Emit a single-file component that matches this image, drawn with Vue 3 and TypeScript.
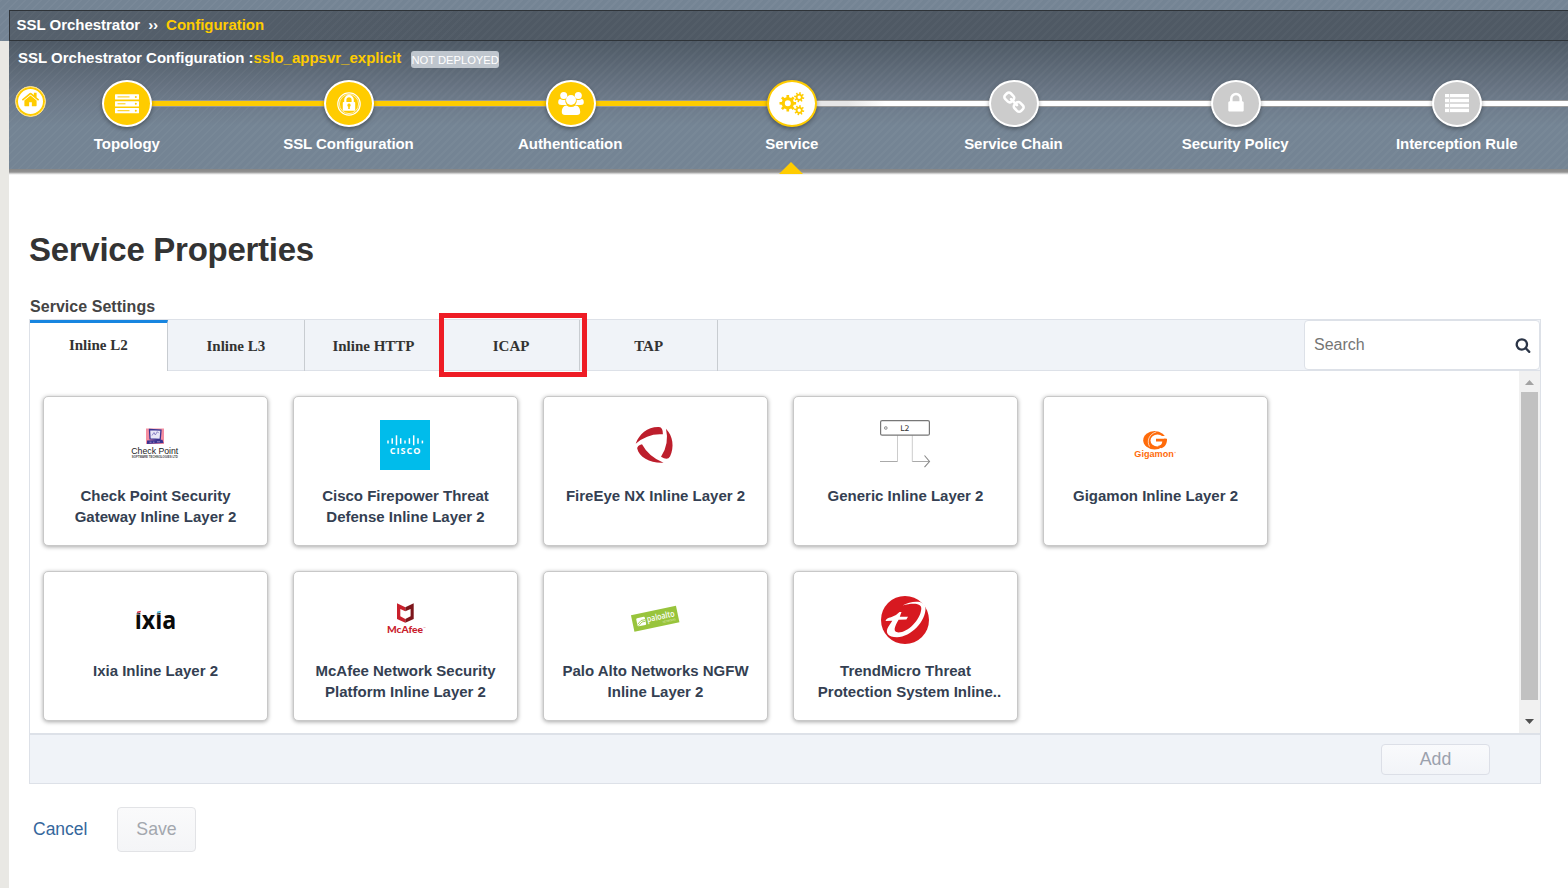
<script setup lang="ts">
interface Step {
  label: string
  icon: string
  state: 'done' | 'active' | 'todo'
}

interface ServiceCard {
  logo: string
  lines: string[]
  truncated?: boolean
}

const steps: Step[] = [
  { label: 'Topology', icon: 'server', state: 'done' },
  { label: 'SSL Configuration', icon: 'badge-lock', state: 'done' },
  { label: 'Authentication', icon: 'users', state: 'done' },
  { label: 'Service', icon: 'cogs', state: 'active' },
  { label: 'Service Chain', icon: 'chain', state: 'todo' },
  { label: 'Security Policy', icon: 'lock', state: 'todo' },
  { label: 'Interception Rule', icon: 'list', state: 'todo' },
]

const tabs: string[] = ['Inline L2', 'Inline L3', 'Inline HTTP', 'ICAP', 'TAP']

const cards: ServiceCard[] = [
  { logo: 'checkpoint', lines: ['Check Point Security', 'Gateway Inline Layer 2'] },
  { logo: 'cisco', lines: ['Cisco Firepower Threat', 'Defense Inline Layer 2'] },
  { logo: 'fireeye', lines: ['FireEye NX Inline Layer 2'] },
  { logo: 'generic', lines: ['Generic Inline Layer 2'] },
  { logo: 'gigamon', lines: ['Gigamon Inline Layer 2'] },
  { logo: 'ixia', lines: ['Ixia Inline Layer 2'] },
  { logo: 'mcafee', lines: ['McAfee Network Security', 'Platform Inline Layer 2'] },
  { logo: 'paloalto', lines: ['Palo Alto Networks NGFW', 'Inline Layer 2'] },
  { logo: 'trend', lines: ['TrendMicro Threat', 'Protection System Inline..'], truncated: true },
]

// Start and length of each bar of the Cisco bridge mark.
const ciscoBars: { x: number; y: number; h: number }[] = [
  { x: 8, y: 20.6, h: 2.8 }, { x: 12.2, y: 18.2, h: 5.6 }, { x: 16.5, y: 15.3, h: 10 },
  { x: 20.7, y: 18.2, h: 5.6 }, { x: 25, y: 20.6, h: 2.8 }, { x: 29.4, y: 18.2, h: 5.6 },
  { x: 33.7, y: 15.3, h: 10 }, { x: 38, y: 18.2, h: 5.6 }, { x: 42.4, y: 20.6, h: 2.8 },
]

// Outline of a cog with square teeth and a round hole.
function gear(cx: number, cy: number, inner: number, outer: number, hole: number, teeth = 8, phase = 0): string {
  const pts: string[] = []
  const stepAngle = (Math.PI * 2) / teeth
  const at = (r: number, a: number) => `${(cx + r * Math.cos(a)).toFixed(2)} ${(cy + r * Math.sin(a)).toFixed(2)}`
  for (let i = 0; i < teeth; i++) {
    const a = i * stepAngle + phase
    pts.push(at(inner, a - stepAngle * 0.28), at(outer, a - stepAngle * 0.2), at(outer, a + stepAngle * 0.2), at(inner, a + stepAngle * 0.28))
  }
  return `M${pts.join('L')}ZM${cx - hole} ${cy}a${hole} ${hole} 0 1 0 ${hole * 2} 0a${hole} ${hole} 0 1 0 ${-hole * 2} 0Z`
}

const gears: string[] = [
  gear(9.8, 13.3, 6.2, 8.4, 3),
  gear(21.2, 7.2, 3.5, 5.1, 1.7, 8, 0.2),
  gear(21.2, 20.2, 3.5, 5.1, 1.7, 8, 0.2),
]
</script>

<template>
  <div class="page">
    <header class="top">
      <div class="crumbs">
        <span>SSL Orchestrator</span><span class="sep">››</span><span class="accent">Configuration</span>
      </div>
    </header>
    <div class="body">
      <section class="wizard">
        <div class="title-row">
          <span>SSL Orchestrator Configuration :<span class="accent">sslo_appsvr_explicit</span></span>
          <span class="status">NOT DEPLOYED</span>
        </div>
        <div class="home">
          <svg viewBox="0 0 1792 1792" width="19" height="19"><path fill="#fc0" d="M1472 992v480q0 26-19 45t-45 19h-384v-384h-256v384h-384q-26 0-45-19t-19-45v-480q0-1 .5-3t.5-3l575-474 575 474q1 2 1 6zm223-69l-62 74q-8 9-21 11h-3q-13 0-21-7l-692-577-692 577q-12 8-24 7-13-2-21-11l-62-74q-8-10-7-23.5t11-21.5l719-599q32-26 76-26t76 26l244 204v-195q0-14 9-23t23-9h192q14 0 23 9t9 23v408l219 182q10 8 11 21.5t-7 23.5z" /></svg>
        </div>
        <div class="steps">
          <div v-for="s in steps" :key="s.label" class="step" :class="s.state">
            <div class="dot">
              <svg v-if="s.icon === 'server'" viewBox="0 0 28 28" width="28" height="28">
                <g fill="#fff">
                  <rect x="2" y="4.3" width="24" height="5.2" rx=".5" /><rect x="2" y="11.2" width="24" height="5.2" rx=".5" /><rect x="2" y="18.1" width="24" height="5.2" rx=".5" />
                </g>
                <g fill="#fc0">
                  <rect x="4.5" y="6.4" width="12" height="1" /><rect x="4.5" y="13.3" width="8" height="1" /><rect x="4.5" y="20.2" width="12" height="1" />
                  <circle cx="22.8" cy="6.9" r="1" /><circle cx="22.8" cy="13.8" r="1" /><circle cx="22.8" cy="20.7" r="1" />
                </g>
              </svg>
              <svg v-else-if="s.icon === 'badge-lock'" viewBox="0 0 28 28" width="28" height="28">
                <circle cx="14" cy="14" r="11.2" fill="none" stroke="#fff" stroke-width="1.2" />
                <circle cx="14" cy="14" r="9.6" fill="none" stroke="#fff" stroke-opacity=".7" stroke-width="1" />
                <path d="M10.3 13V9.8a3.7 3.7 0 0 1 7.4 0V13" fill="none" stroke="#fff" stroke-width="2.2" />
                <rect x="7.8" y="12" width="12.4" height="8.8" rx=".8" fill="#fff" />
                <path d="M14 13.6a1.7 1.7 0 0 1 .8 3.2v2.3h-1.6v-2.3a1.7 1.7 0 0 1 .8-3.2z" fill="#fc0" />
              </svg>
              <svg v-else-if="s.icon === 'users'" viewBox="0 0 28 28" width="28" height="28">
                <g fill="#fff">
                  <circle cx="6.7" cy="5.5" r="3.5" /><circle cx="21.3" cy="5.5" r="3.5" />
                  <path d="M8.4 9.4a6 6 0 0 0 1.4 5.6H4.5Q1.2 15 1.2 12.5C1.2 9.6 2.2 8.9 3.2 8.9q3 2 5.2.5zM19.6 9.4a6 6 0 0 1-1.4 5.6h5.3q3.3 0 3.3-2.5c0-2.9-1-3.6-2-3.6q-3 2-5.2.5z" />
                  <circle cx="14" cy="10" r="5" />
                  <path d="M9.6 15.5q4.4 3 8.8 0c3.300 0 4.800 3 4.800 6.600q0 3-3.200 3H8q-3.200 0-3.200-3c0-3.600 1.500-6.600 4.800-6.600z" />
                </g>
              </svg>
              <svg v-else-if="s.icon === 'cogs'" viewBox="0 0 28 28" width="28" height="28">
                <path v-for="g in gears" :key="g" :d="g" fill="#fc0" fill-rule="evenodd" />
              </svg>
              <svg v-else-if="s.icon === 'chain'" class="raised" viewBox="0 0 1792 1792" width="24" height="24"><path fill="#fff" d="M1520 1216q0-40-28-68l-208-208q-28-28-68-28-42 0-72 32 3 3 19 18.5t21.5 21.5 15 19 13 25.5 3.5 27.5q0 40-28 68t-68 28q-15 0-27.5-3.5t-25.5-13-19-15-21.5-21.5-18.5-19q-33 31-33 73 0 40 28 68l206 207q27 27 68 27 40 0 68-26l147-146q28-28 28-67zm-703-705q0-40-28-68l-206-207q-28-28-68-28-39 0-68 27l-147 146q-28 28-28 67 0 40 28 68l208 208q27 27 68 27 42 0 72-31-3-3-19-18.5t-21.5-21.5-15-19-13-25.5-3.5-27.5q0-40 28-68t68-28q15 0 27.5 3.5t25.5 13 19 15 21.5 21.5 18.5 19q33-31 33-73zm895 705q0 120-85 203l-147 146q-83 83-203 83-121 0-204-85l-206-207q-83-83-83-203 0-123 88-209l-88-88q-86 88-208 88-120 0-204-84l-208-208q-84-84-84-204t85-203l147-146q83-83 203-83 121 0 204 85l206 207q83 83 83 203 0 123-88 209l88 88q86-88 208-88 120 0 204 84l208 208q84 84 84 204z" /></svg>
              <svg v-else-if="s.icon === 'lock'" class="raised" viewBox="0 0 1792 1792" width="24" height="24"><path fill="#fff" d="M640 768h512v-192q0-106-75-181t-181-75-181 75-75 181v192zm832 96v576q0 40-28 68t-68 28h-960q-40 0-68-28t-28-68v-576q0-40 28-68t68-28h32v-192q0-184 132-316t316-132 316 132 132 316v192h32q40 0 68 28t28 68z" /></svg>
              <svg v-else viewBox="0 0 28 28" width="28" height="28">
                <rect x="2" y="4" width="24" height="18.5" fill="#fff" fill-opacity=".3" />
                <g fill="#fff">
                  <rect x="2" y="4" width="4" height="3" /><rect x="7" y="4" width="19" height="3" />
                  <rect x="2" y="9" width="4" height="3" /><rect x="7" y="9" width="19" height="3" />
                  <rect x="2" y="14" width="4" height="3" /><rect x="7" y="14" width="19" height="3" />
                  <rect x="2" y="19" width="4" height="3" /><rect x="7" y="19" width="19" height="3" />
                </g>
              </svg>
            </div>
            <div class="label">{{ s.label }}</div>
          </div>
        </div>
      </section>

      <main class="content">
        <h1>Service Properties</h1>
        <h2>Service Settings</h2>
        <section class="panel">
          <div class="tabbar">
            <div v-for="(t, i) in tabs" :key="t" class="tab" :class="{ current: i === 0, marked: t === 'ICAP' }">{{ t }}</div>
            <div class="search">
              <span>Search</span>
              <svg viewBox="0 0 1792 1792" width="16" height="16"><path fill="#2b3547" d="M1216 832q0-185-131.5-316.5t-316.5-131.5-316.5 131.5-131.5 316.5 131.5 316.5 316.5 131.5 316.5-131.5 131.5-316.5zm512 832q0 52-38 90t-90 38q-54 0-90-38l-343-342q-179 124-399 124-143 0-273.5-55.5t-225-150-150-225-55.5-273.5 55.5-273.5 150-225 225-150 273.5-55.5 273.5 55.5 225 150 150 225 55.5 273.5q0 220-124 399l343 343q37 37 37 90z" /></svg>
            </div>
          </div>
          <div class="list">
            <div class="cards">
              <article v-for="c in cards" :key="c.logo" class="card">
                <svg class="logo" viewBox="0 0 50 50" width="50" height="50">
                  <g v-if="c.logo === 'checkpoint'">
                    <rect x="16" y="8.5" width="18" height="15.5" fill="#f58ea0" />
                    <path d="M19.5 9.5l11.5.5-.8 9.5-10.2-.6z" fill="#e9e6f6" stroke="#3b3391" stroke-width="1.3" />
                    <path d="M22 15.5l2-3 1.3 2.5 2-3.3 1.5 1.5" fill="none" stroke="#7a70bb" stroke-width=".8" />
                    <path d="M17 20.5l15.500-.8 1 3.300-16.500.9z" fill="#3b3391" />
                    <path d="M19.5 22.2h2M23 22.2h1.5M27 21.800h3" stroke="#b79bd0" stroke-width=".8" />
                    <text x="1.3" y="34.3" font-size="9.5" textLength="47" lengthAdjust="spacingAndGlyphs" fill="#222" class="sans">Check Point</text>
                    <text x="1.8" y="38.3" font-size="3" textLength="46" lengthAdjust="spacingAndGlyphs" fill="#444" class="sans bold">SOFTWARE TECHNOLOGIES LTD</text>
                  </g>
                  <g v-else-if="c.logo === 'cisco'">
                    <rect width="50" height="50" fill="#00bceb" />
                    <path v-for="b in ciscoBars" :key="b.x" :d="`M${b.x} ${b.y}v${b.h}`" stroke="#fff" stroke-width="1.5" />
                    <text x="9.8" y="34.2" font-size="9" textLength="30.5" lengthAdjust="spacing" fill="#fff" class="open bold">CISCO</text>
                  </g>
                  <g v-else-if="c.logo === 'fireeye'" fill="#bd1e2c">
                    <path d="M5.7 23.700C9 14 18 6.500 29 7q4 .3 3.900 7.300Q18 13 5.700 23.700z" />
                    <path d="M36 8.700c7 7.300 8.500 18.300 4 27.800q-2.500 4.500-9 .2Q39.500 24 36 8.700z" />
                    <path d="M33.500 42.700C21 43.500 9 37.500 7.200 28.500Q7 25.500 12 24.200q6.500 12.300 21.500 18.500z" />
                  </g>
                  <g v-else-if="c.logo === 'generic'">
                    <path d="M17.500 41.500V15M32.300 15v26.500" fill="none" stroke="#ccc" />
                    <path d="M0 41.500h17.500M32.300 41.500H49" fill="none" stroke="#aaa" />
                    <path d="M44.500 35.500l5 6-5 5.700" fill="none" stroke="#888" stroke-width="1.1" />
                    <rect x=".6" y=".6" width="48.8" height="14.6" rx="1.5" fill="#fff" stroke="#777" stroke-width="1.2" />
                    <circle cx="5.8" cy="8" r="1.4" fill="#ddd" stroke="#888" stroke-width=".8" />
                    <text x="20.2" y="10.8" font-size="7.8" fill="#333" class="dejavu">L2</text>
                  </g>
                  <g v-else-if="c.logo === 'gigamon'">
                    <ellipse cx="24.6" cy="20.2" rx="11.4" ry="9.2" fill="#ff6b0a" />
                    <ellipse cx="27.5" cy="20.5" rx="7" ry="6" fill="#fff" />
                    <path d="M30 16h7v2.700h-7z" fill="#fff" />
                    <path d="M26 18.700h11c.2 4.300-1.500 7.800-5.500 9.600l-4-2.200q4.600-.6 4.800-4.600H26z" fill="#ff6b0a" />
                    <path d="M19.500 26.500c-3-5.500-.5-12.500 6.800-14.600" fill="none" stroke="#fff" stroke-width=".7" />
                    <text x="4.300" y="37.200" font-size="8.200" textLength="39.500" lengthAdjust="spacingAndGlyphs" fill="#ff6b0a" class="sans bold">Gigamon</text>
                    <circle cx="45" cy="32.500" r=".8" fill="#ffb98c" />
                  </g>
                  <g v-else-if="c.logo === 'ixia'">
                    <text x="4.700" y="34" font-size="25.500" textLength="41.500" lengthAdjust="spacingAndGlyphs" fill="#0a0a0a" class="open bold">ixia</text>
                    <rect x="4.500" y="12" width="8" height="7.300" fill="#fff" /><rect x="25" y="12" width="8" height="7.300" fill="#fff" />
                    <path d="M6.600 19.500v-1l3.700-.6v1.600zM26.800 19.500v-1l3.700-.6v1.600z" fill="#0a0a0a" />
                    <path d="M7.300 16.500l3.800-.7-.8 1.600-3.500.6z" fill="#d8283c" /><path d="M27.400 16.500l3.800-.7-.8 1.600-3.500.6z" fill="#36b6d8" />
                  </g>
                  <g v-else-if="c.logo === 'mcafee'">
                    <path d="M17 8.300l8.300 4v4L20.300 14v7.300l5 2.600v3.900L17 24z" fill="#c9202c" />
                    <path d="M33.700 8.300l-8.400 4v4l5.300-2.300v7.300l-5.300 2.600v3.900l8.400-3.800z" fill="#7d161b" />
                    <text x="7" y="38.300" font-size="9.200" textLength="36" lengthAdjust="spacingAndGlyphs" fill="#c9202c" class="lato">McAfee</text>
                    <path d="M43.500 32.500h2" stroke="#e7a0a5" stroke-width=".7" />
                  </g>
                  <g v-else-if="c.logo === 'paloalto'">
                    <g transform="rotate(-12 25.200 23.700)">
                      <rect x="2.200" y="15.300" width="46" height="16.800" fill="#98c43c" />
                      <rect x="6.500" y="19.500" width="8.800" height="8.200" rx="1" fill="#fff" />
                      <path d="M7 25.500l4-3h4M7.500 27.200l4-3h3.500" fill="none" stroke="#98c43c" stroke-width=".8" />
                      <text x="17" y="25.500" font-size="8.800" textLength="28" lengthAdjust="spacingAndGlyphs" fill="#fff" class="open semi">paloalto</text>
                      <text x="32" y="29.500" font-size="2.800" textLength="13" lengthAdjust="spacingAndGlyphs" fill="#e3f0c4" class="open">NETWORKS</text>
                    </g>
                  </g>
                  <g v-else>
                    <circle cx="25" cy="25" r="24" fill="#d71920" />
                    <path d="M22.500 10.500C31 5.500 45 4.500 45.500 13 46 26 31 42 17 42.300 8 42.300 4.500 37.500 8.500 31.500L12.300 25.800l-6.800.2Q6.500 23 11 22.300 16 21 19.500 17h2l-1.700 4.800H28l-1.600 2.600-7.800.4C15 31 12 37.300 18.500 37.500 28 37.300 40.300 25 41.300 14 42 7.500 31.500 8 22.500 10.500z" fill="#fff" />
                  </g>
                </svg>
                <p class="name" :class="{ truncated: c.truncated }"><span v-for="l in c.lines" :key="l">{{ l }}</span></p>
              </article>
            </div>
            <div class="scroll">
              <svg viewBox="0 0 21 21" width="21" height="21"><path d="M6 14h9l-4.500-5z" fill="#a3a3a3" /></svg>
              <div class="thumb"></div>
              <svg viewBox="0 0 21 21" width="21" height="21"><path d="M6 7h9l-4.500 5z" fill="#505050" /></svg>
            </div>
          </div>
          <div class="panel-foot"><button class="btn add" type="button">Add</button></div>
        </section>
        <div class="actions">
          <a class="cancel">Cancel</a>
          <button class="btn save" type="button">Save</button>
        </div>
      </main>
    </div>
  </div>
</template>

<style>
body {
  background: #e9e8e4;
  overflow: hidden;
}
</style>

<style scoped>
*,
*::before,
*::after {
  box-sizing: border-box;
}
.page {
  width: 1568px;
  height: 888px;
  overflow: hidden;
  font-family: "Liberation Sans", Arial, sans-serif;
  background: #e9e8e4;
}
.top {
  height: 41px;
  padding: 10px 0 0 9px;
  background: repeating-linear-gradient(135deg, rgba(255, 255, 255, 0.035) 0 2px, transparent 2px 5.66px), #748494;
}
.crumbs {
  height: 31px;
  width: 1570px;
  border: 1px solid #2e3338;
  padding: 0 6.5px;
  background: repeating-linear-gradient(135deg, rgba(255, 255, 255, 0.025) 0 2px, transparent 2px 5.66px), linear-gradient(90deg, #56616d, #4f5964 30%, #4f5964);
  color: #fff;
  font-size: 15px;
  font-weight: bold;
  line-height: 28px;
  letter-spacing: -0.02px;
  white-space: nowrap;
}
.sep {
  margin: 0 8px;
}
.accent {
  color: #fc0;
}
.body {
  margin-left: 9px;
  height: 847px;
  background: #fff;
}
.wizard {
  position: relative;
  height: 134px;
  overflow: hidden;
  padding-top: 7px;
  background:
    linear-gradient(#868686, #929292 3px, #b9b9b9 4px, #e6e6e6 5px, #fff 6px) 0 128px / 100% 6px no-repeat,
    repeating-linear-gradient(135deg, rgba(255, 255, 255, 0.03) 0 2px, transparent 2px 5.66px),
    linear-gradient(#4f5a66, #6b7887 55px, #748494 85px, #748494);
  color: #fff;
  font-weight: bold;
}
.title-row {
  display: flex;
  padding-left: 9px;
  height: 20px;
  font-size: 15px;
  line-height: 20px;
  white-space: nowrap;
}
.status {
  width: 88px;
  height: 17px;
  margin: 3px 0 0 10px;
  border-radius: 3px;
  background: #bfc6ce;
  font-size: 11.2px;
  font-weight: normal;
  line-height: 18px;
  text-align: center;
}
.home {
  position: absolute;
  left: 6px;
  top: 45px;
  width: 31px;
  height: 31px;
  border-radius: 50%;
  border: 1px solid #ffdf80;
  background: #fff;
  box-shadow: inset 0 0 0 2px #fc0;
  display: flex;
  align-items: center;
  justify-content: center;
}
.home svg {
  margin-top: -5px;
}
.steps {
  display: flex;
  margin: 12px 0 0 7.5px;
}
.step {
  position: relative;
  flex: 0 0 221.67px;
  height: 95px;
  display: flex;
  flex-direction: column;
  align-items: center;
}
.step::before {
  content: "";
  position: absolute;
  left: 50%;
  top: 20px;
  width: 100%;
  height: 7px;
  border: solid #999;
  border-width: 1px 0;
  background: #fff;
}
.step.done::before {
  background: #fc0;
}
.step.active::before {
  background: linear-gradient(90deg, #e6e6e6 25%, #fff 42%);
}
.step.active::after {
  content: "";
  position: absolute;
  bottom: 1px;
  left: 98px;
  border: solid transparent;
  border-width: 0 12px 12px;
  border-bottom-color: #fc0;
}
.dot {
  position: relative;
  z-index: 1;
  width: 50px;
  height: 47px;
  border: 2px solid #fff;
  border-radius: 50%;
  background: #ccc;
  box-shadow: 0 2px 4px rgba(0, 0, 0, 0.35);
  display: flex;
  align-items: center;
  justify-content: center;
}
.raised {
  margin-top: -1px;
}
.done .dot {
  background: #fc0;
}
.active .dot {
  background: #fff;
  border-color: #fc0;
}
.label {
  margin: 8px 1px 0 0;
  font-size: 15px;
  line-height: 18px;
  letter-spacing: -0.05px;
  white-space: nowrap;
}
.content {
  padding: 0 27px 0 20px;
}
h1 {
  margin: 55px 0 0;
  height: 40px;
  font-size: 33px;
  line-height: 40px;
  letter-spacing: -0.28px;
  color: #333;
}
h2 {
  margin: 27px 0 0 1px;
  height: 22px;
  font-size: 16px;
  line-height: 19px;
  letter-spacing: 0.04px;
  color: #444;
}
.panel {
  width: 1512px;
  height: 465px;
  border: 1px solid #dde1e8;
}
.tabbar {
  display: flex;
  height: 51px;
  background: #f0f3f8;
  border-bottom: 1px solid #dde1e8;
}
.tab {
  position: relative;
  width: 137.6px;
  height: 51px;
  border-right: 1px solid #c8ccd1;
  font: bold 15px/53px "Liberation Serif", "Times New Roman", serif;
  text-align: center;
  color: #333;
}
.tab.current {
  background: #fff;
  border-top: 3px solid #1785e0;
  line-height: 45px;
}
.tab.marked::after {
  content: "";
  position: absolute;
  left: -4px;
  top: -7px;
  width: 148px;
  height: 64px;
  border: 5px solid #ee1c25;
}
.search {
  margin-left: auto;
  width: 236px;
  height: 50px;
  padding: 0 8px 0 9px;
  display: flex;
  align-items: center;
  justify-content: space-between;
  border: 1px solid #dde1e8;
  border-radius: 4px;
  background: #fff;
  color: #757575;
  font-size: 16px;
}
.search svg {
  margin-top: 0;
}
.search span {
  margin-top: -1px;
}
.list {
  display: flex;
  height: 362px;
}
.cards {
  flex: 1;
  display: grid;
  grid-template-columns: repeat(5, 225px);
  grid-auto-rows: 150px;
  gap: 25px;
  padding: 25px 0 0 13px;
}
.card {
  display: flex;
  flex-direction: column;
  align-items: center;
  padding-top: 23px;
  border: 1px solid #c8c8c8;
  border-radius: 5px;
  background: #fff;
  box-shadow: 0 1px 4px rgba(0, 0, 0, 0.35);
}
.logo {
  display: block;
  margin-right: 1px;
  overflow: visible;
}
.name {
  margin: 15px 0 0;
  display: flex;
  flex-direction: column;
  align-items: center;
  font-size: 15px;
  font-weight: bold;
  line-height: 21px;
  white-space: nowrap;
  color: #343f52;
}
.name.truncated span:last-child {
  padding-left: 8px;
}
.sans {
  font-family: "Liberation Sans", Arial, sans-serif;
}
.open {
  font-family: "Open Sans", sans-serif;
}
.lato {
  font-family: Lato, sans-serif;
  font-weight: 900;
}
.dejavu {
  font-family: "DejaVu Sans", sans-serif;
}
.bold {
  font-weight: bold;
}
.semi {
  font-weight: 600;
}
.scroll {
  width: 21px;
  background: #f1f1f1;
  display: flex;
  flex-direction: column;
  align-items: center;
}
.scroll svg {
  display: block;
  flex: none;
}
.thumb {
  width: 17px;
  height: 308px;
  margin-bottom: 12px;
  background: #c1c1c1;
}
.panel-foot {
  height: 50px;
  border-top: 2px solid #dde1e8;
  background: #f0f3f8;
  display: flex;
  justify-content: flex-end;
  padding: 9px 50px 0 0;
}
.btn {
  border: 1px solid #dcdfe7;
  border-radius: 4px;
  background: linear-gradient(#f9fafc, #f2f4f8);
  color: #9ba1ad;
  font: 17.7px "Liberation Sans", Arial, sans-serif;
  padding: 0;
}
.add {
  width: 109px;
  height: 31px;
}
.actions {
  display: flex;
  align-items: center;
  margin-top: 23px;
  padding-left: 4px;
}
.cancel {
  font-size: 17.5px;
  width: 84px;
  color: #35679c;
}
.save {
  width: 79px;
  height: 45px;
  border-color: #e2e3e6;
  background: linear-gradient(#fafafb, #f4f5f7);
  color: #a3a7ae;
}
</style>
